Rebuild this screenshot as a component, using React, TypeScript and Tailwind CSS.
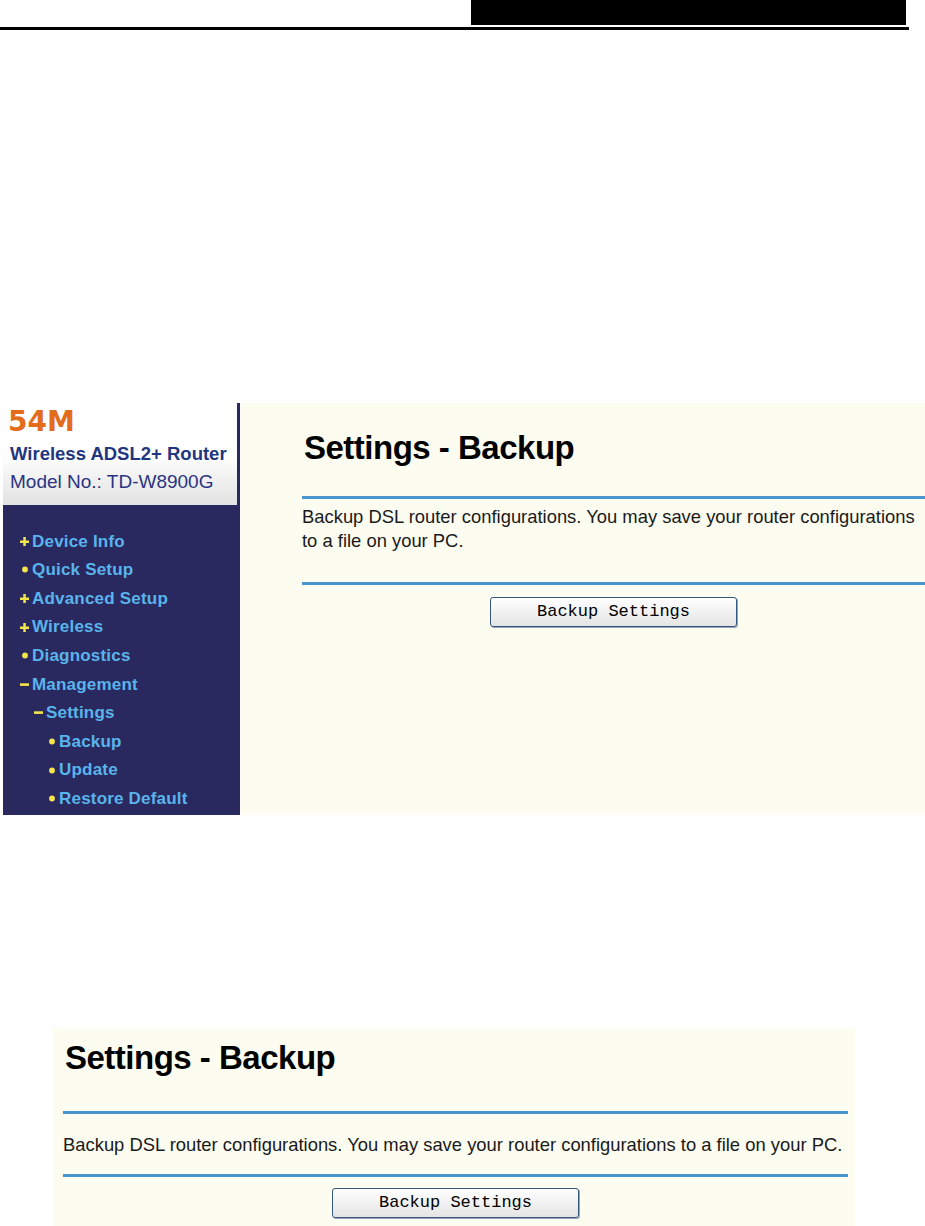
import React from 'react';

type MenuItem = {
  label: string;
  icon: 'plus' | 'dot' | 'minus';
  level: 0 | 1 | 2;
};

const menu: MenuItem[] = [
  { label: 'Device Info', icon: 'plus', level: 0 },
  { label: 'Quick Setup', icon: 'dot', level: 0 },
  { label: 'Advanced Setup', icon: 'plus', level: 0 },
  { label: 'Wireless', icon: 'plus', level: 0 },
  { label: 'Diagnostics', icon: 'dot', level: 0 },
  { label: 'Management', icon: 'minus', level: 0 },
  { label: 'Settings', icon: 'minus', level: 1 },
  { label: 'Backup', icon: 'dot', level: 2 },
  { label: 'Update', icon: 'dot', level: 2 },
  { label: 'Restore Default', icon: 'dot', level: 2 },
];

const indent = {
  0: 'pl-[17px]',
  1: 'pl-[31px]',
  2: 'pl-[44px]',
};

const MenuIcon: React.FC<{ kind: MenuItem['icon'] }> = ({ kind }) => {
  if (kind === 'plus') {
    return (
      <svg width="9" height="9" viewBox="0 0 9 9" className="block">
        <rect x="0" y="3.5" width="9" height="2.5" fill="#f3e64a" />
        <rect x="3.3" y="0" width="2.5" height="9" fill="#f3e64a" />
      </svg>
    );
  }
  if (kind === 'minus') {
    return (
      <svg width="9" height="9" viewBox="0 0 9 9" className="block">
        <rect x="0" y="3.3" width="9" height="2.6" fill="#f3e64a" />
      </svg>
    );
  }
  return (
    <svg width="9" height="9" viewBox="0 0 9 9" className="block">
      <circle cx="5" cy="4.5" r="2.9" fill="#f3e64a" />
    </svg>
  );
};

const Sidebar: React.FC = () => (
  <aside className="w-[237px] shrink-0 bg-[#29295f] flex flex-col">
    <div className="h-[102px] mr-[3px] bg-gradient-to-b from-white via-white to-[#e2e2e2] pl-[7px] pt-[3px] font-['Liberation_Sans',Arial,sans-serif]">
      <div className="ml-[-2px] font-['DejaVu_Sans',sans-serif] font-bold text-[28px] leading-[32px] text-[#e46d1d]">
        54M
      </div>
      <div className="mt-[5px] font-bold text-[18.5px] leading-[22px] text-[#22367f]">
        Wireless ADSL2+ Router
      </div>
      <div className="mt-[5px] text-[19px] leading-[24px] text-[#2a3482]">Model No.: TD-W8900G</div>
    </div>
    <nav className="pt-[22px] font-['Liberation_Sans',Arial,sans-serif]">
      {menu.map((item) => (
        <div key={item.label} className={`h-[28.6px] flex items-center ${indent[item.level]}`}>
          <span className="w-[12px] shrink-0">
            <MenuIcon kind={item.icon} />
          </span>
          <span className="text-[17px] font-bold text-[#5ab4ec] tracking-[0.2px]">{item.label}</span>
        </div>
      ))}
    </nav>
  </aside>
);

const BackupButton: React.FC = () => (
  <button className="w-[247px] h-[30px] rounded-[3px] border border-[#34557f] bg-gradient-to-b from-white to-[#e4e4e4] shadow-[1px_1px_0_#9aa4b4] font-['Liberation_Mono',monospace] text-[17px] text-black">
    Backup Settings
  </button>
);

const Rule: React.FC = () => <div className="h-[3px] bg-[#4b95cd]" />;

export default function App() {
  return (
    <div className="min-h-[1226px] bg-white font-['Liberation_Sans',Arial,sans-serif]">
      {/* running header */}
      <div className="w-[909px]">
        <div className="flex justify-end pr-[3px]">
          <div className="w-[435px] h-[25px] bg-black" />
        </div>
        <div className="mt-[2px] h-[3px] bg-black" />
      </div>

      {/* full page screenshot */}
      <div className="mt-[373px] ml-[3px] h-[412px] flex">
        <Sidebar />
        <main className="flex-1 bg-[#fcfcf0] pl-[62px] pt-[28px]">
          <h1 className="text-[33px] leading-[33px] font-bold tracking-[-0.5px] text-black pl-[2px]">
            Settings - Backup
          </h1>
          <div className="mt-[32px]">
            <Rule />
          </div>
          <p className="pt-[6px] text-[18.4px] leading-[24px] text-[#1a1a1a]">
            Backup DSL router configurations. You may save your router configurations to a file on your PC.
          </p>
          <div className="mt-[29px]">
            <Rule />
          </div>
          <div className="mt-[12px] flex justify-center">
            <BackupButton />
          </div>
        </main>
      </div>

      {/* cropped screenshot */}
      <div className="mt-[213px] ml-[53px] w-[802px] h-[198px] bg-[#fcfcf0] pl-[10px] pr-[7px] pt-[13px]">
        <h1 className="text-[33px] leading-[33px] font-bold tracking-[-0.5px] text-black pl-[2px]">
          Settings - Backup
        </h1>
        <div className="mt-[37px]">
          <Rule />
        </div>
        <p className="pt-[19px] text-[18.4px] leading-[24px] text-[#1a1a1a]">
          Backup DSL router configurations. You may save your router configurations to a file on your PC.
        </p>
        <div className="mt-[17px]">
          <Rule />
        </div>
        <div className="mt-[11px] flex justify-center">
          <BackupButton />
        </div>
      </div>
    </div>
  );
}
